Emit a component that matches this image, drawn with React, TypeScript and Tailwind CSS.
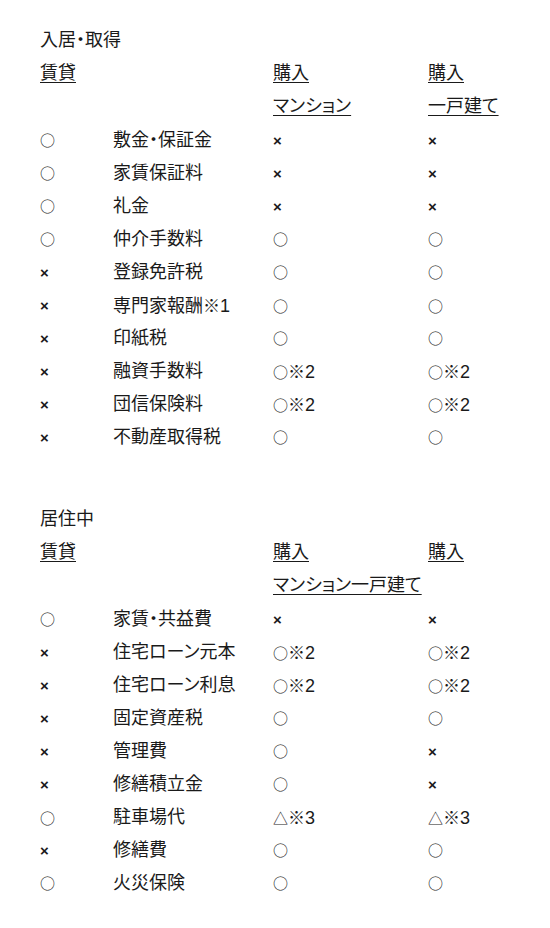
import React from "react";

const FONT = { fontFamily: '"Liberation Sans", "Noto Sans CJK JP", sans-serif' };

function Cell({ text }: { text: string }) {
  const parts = Array.from(text);
  return (
    <span>
      {parts.map((ch, i) =>
        ch === "○" || ch === "△" ? (
          <span key={i} className="font-['Noto_Sans_CJK_JP'] text-[15px]">
            {ch}
          </span>
        ) : ch === "※" ? (
          <span key={i} className="font-['Noto_Sans_CJK_JP'] text-[17px]">
            {ch}
          </span>
        ) : ch === "×" ? (
          <span key={i} className="font-bold text-[15px]">
            {ch}
          </span>
        ) : (
          <span key={i}>{ch}</span>
        )
      )}
    </span>
  );
}

type Row = [string, string, string, string];

const rows1: Row[] = [
  ["○", "敷金・保証金", "×", "×"],
  ["○", "家賃保証料", "×", "×"],
  ["○", "礼金", "×", "×"],
  ["○", "仲介手数料", "○", "○"],
  ["×", "登録免許税", "○", "○"],
  ["×", "専門家報酬※1", "○", "○"],
  ["×", "印紙税", "○", "○"],
  ["×", "融資手数料", "○※2", "○※2"],
  ["×", "団信保険料", "○※2", "○※2"],
  ["×", "不動産取得税", "○", "○"],
];

const rows2: Row[] = [
  ["○", "家賃・共益費", "×", "×"],
  ["×", "住宅ローン元本", "○※2", "○※2"],
  ["×", "住宅ローン利息", "○※2", "○※2"],
  ["×", "固定資産税", "○", "○"],
  ["×", "管理費", "○", "×"],
  ["×", "修繕積立金", "○", "×"],
  ["○", "駐車場代", "△※3", "△※3"],
  ["×", "修繕費", "○", "○"],
  ["○", "火災保険", "○", "○"],
];

const GRID = "grid grid-cols-[73px_160px_155px_1fr] h-[33px] items-center";
const U = "underline underline-offset-[3px] decoration-1";

function Section({ title, rows, merged }: { title: string; rows: Row[]; merged?: boolean }) {
  return (
    <div className="flex flex-col">
      <div className="h-[33px] flex items-center">
        <Cell text={title} />
      </div>
      <div className={GRID}>
        <span className={U}>賃貸</span>
        <span />
        <span className={U}>購入</span>
        <span className={U}>購入</span>
      </div>
      <div className={GRID}>
        <span />
        <span />
        {merged ? (
          <span className={`${U} whitespace-nowrap col-span-2`}>マンション一戸建て</span>
        ) : (
          <>
            <span className={U}>マンション</span>
            <span className={U}>一戸建て</span>
          </>
        )}
      </div>
      {rows.map((r, i) => (
        <div key={i} className={GRID}>
          <Cell text={r[0]} />
          <span className="whitespace-nowrap">
            <Cell text={r[1]} />
          </span>
          <Cell text={r[2]} />
          <Cell text={r[3]} />
        </div>
      ))}
    </div>
  );
}

export default function App() {
  return (
    <div
      className="w-[550px] min-h-[928px] bg-white text-[#1a1a1a] text-[18px] leading-[33px] pl-[40px] pt-[24px] flex flex-col gap-[50px] [font-feature-settings:'palt']"
      style={FONT}
    >
      <Section title="入居・取得" rows={rows1} />
      <Section title="居住中" rows={rows2} merged />
    </div>
  );
}
